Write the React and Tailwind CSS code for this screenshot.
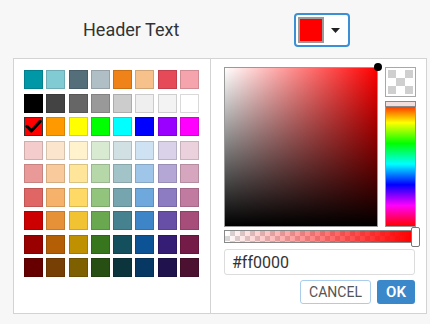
import { useState } from 'react';

const palette = [
  ['#0097a7', '#80cbd4', '#546e7a', '#b0bec5', '#ef8319', '#f6c18a', '#e64a59', '#f5a4ad'],
  ['#000000', '#434343', '#666666', '#999999', '#cccccc', '#efefef', '#f3f3f3', '#ffffff'],
  ['#ff0000', '#ff9900', '#ffff00', '#00ff00', '#00ffff', '#0000ff', '#9900ff', '#ff00ff'],
  ['#f4cccc', '#fce5cd', '#fff2cc', '#d9ead3', '#d0e0e3', '#cfe2f3', '#d9d2e9', '#ead1dc'],
  ['#ea9999', '#f9cb9c', '#ffe599', '#b6d7a8', '#a2c4c9', '#9fc5e8', '#b4a7d6', '#d5a6bd'],
  ['#e06666', '#f6b26b', '#ffd966', '#93c47d', '#76a5af', '#6fa8dc', '#8e7cc3', '#c27ba0'],
  ['#cc0000', '#e69138', '#f1c232', '#6aa84f', '#45818e', '#3d85c6', '#674ea7', '#a64d79'],
  ['#990000', '#b45f06', '#bf9000', '#38761d', '#134f5c', '#0b5394', '#351c75', '#741b47'],
  ['#660000', '#783f04', '#7f6000', '#274e13', '#0c343d', '#073763', '#20124d', '#4c1130'],
];

function Swatch({ color, selected, onClick }) {
  return (
    <button
      onClick={onClick}
      className={
        selected
          ? 'relative w-[19px] h-[19px] border-[1.5px] border-[#333] p-0'
          : 'relative w-[19px] h-[19px] border border-black/15 p-0'
      }
      style={{ backgroundColor: color }}
    >
      {selected && (
        <svg viewBox="0 0 16 16" className="absolute inset-0 w-full h-full">
          <path d="M2 8 L6 12.2 L14.2 3.2" fill="none" stroke="#000" strokeWidth="3" strokeLinecap="round" strokeLinejoin="round" />
        </svg>
      )}
    </button>
  );
}

export default function App() {
  const [value, setValue] = useState('#ff0000');
  const checker = [1, 0, 1, 0, 1, 0, 1, 0, 1];

  return (
    <div className="w-[430px] h-[324px] bg-[#f7f7f7] overflow-hidden font-['Roboto',sans-serif] text-[#333]">
      {/* header */}
      <div className="flex items-center pt-[13px] h-[47px]">
        <span className="ml-[83px] text-[18px] leading-none text-[#333]">Header Text</span>
        <button className="ml-[115px] w-[56px] h-[34px] flex items-center bg-white border-2 border-[#3b8fd4] rounded-[4px] pl-[2px]">
          <span className="w-[26px] h-[26px] border-2 border-[#9a9a9a] bg-[#ff0000]" />
          <svg width="9" height="5" viewBox="0 0 9 5" className="ml-[7px] mt-[1px]">
            <path d="M0 0 H9 L4.5 5 Z" fill="#222" />
          </svg>
        </button>
      </div>

      {/* panel */}
      <div className="mt-[11px] ml-[13px] w-[414px] h-[256px] bg-white border border-[#d3d3d3] flex">
        <div className="w-[198px] border-r border-[#d3d3d3] pl-[10px] pt-[11px]">
          <div className="grid grid-cols-[repeat(8,19px)] gap-x-[3.3px] gap-y-[4.5px]">
            {palette.flat().map((c, i) => (
              <Swatch key={i} color={c} selected={c === value} onClick={() => setValue(c)} />
            ))}
          </div>
        </div>

        <div className="flex-1 pl-[13px] pt-[8px] pr-[10px]">
          <div className="flex gap-[7px]">
            <div className="relative w-[154px] h-[160px] border border-[#999] bg-[#ff0000] bg-[linear-gradient(to_top,#000,rgba(0,0,0,0)),linear-gradient(to_right,#fff,rgba(255,255,255,0))]">
              <span className="absolute -right-[5px] -top-[5px] w-[8px] h-[8px] rounded-full bg-black" />
            </div>
            <div className="flex flex-col gap-[4px]">
              <div className="w-[31px] h-[30px] border border-[#a8a8a8] p-[2px]">
                <div className="grid grid-cols-3 w-full h-full">
                  {checker.map((g, i) => (
                    <span key={i} className={g ? 'bg-[#cfcfcf]' : 'bg-white'} />
                  ))}
                </div>
              </div>
              <div className="relative w-[31px] h-[126px] border border-[#999] bg-[linear-gradient(to_bottom,#f00,#ff0,#0f0,#0ff,#00f,#f0f,#f00)]">
                <span className="absolute -left-[1px] -right-[1px] -top-[1px] h-[6px] bg-[#f3dede] border border-[#888]" />
              </div>
            </div>
          </div>

          <div className="relative mt-[3px] w-[189px] h-[13px] border border-[#888] bg-[linear-gradient(to_right,rgba(255,0,0,0),#f00),repeating-conic-gradient(#d8d8d8_0_25%,#fff_0_50%)] bg-[length:100%_100%,10px_10px]">
            <span className="absolute -right-[8px] -top-[4px] w-[9px] h-[20px] bg-white border border-[#777] rounded-[2px]" />
          </div>

          <input
            value={value}
            onChange={(e) => setValue(e.target.value)}
            className="block mt-[6px] w-[191px] h-[26px] border border-[#dcdcdc] rounded-[3px] px-[7px] text-[16px] text-[#333] font-['Roboto',sans-serif] outline-none"
          />

          <div className="flex justify-end gap-[6px] mt-[5px] w-[191px]">
            <button className="w-[71px] h-[24px] border border-[#a9cdeb] rounded-[3px] text-[14px] text-[#555] bg-white">
              CANCEL
            </button>
            <button className="w-[38px] h-[24px] rounded-[3px] text-[15px] font-semibold text-white bg-[#3a87c9]">
              OK
            </button>
          </div>
        </div>
      </div>
    </div>
  );
}
